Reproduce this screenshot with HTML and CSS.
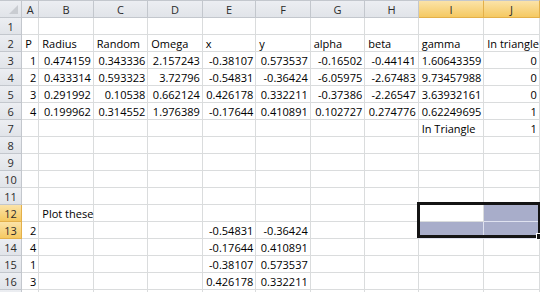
FILE: index.html
```html
<!DOCTYPE html>
<html lang="en">
<head>
    <meta charset="UTF-8">
    <meta name="viewport" content="width=device-width, initial-scale=1.0">
    <title>Sheet1</title>
    <link rel="stylesheet" href="styles.css">
</head>
<body>
    <table class="sheet">
        <colgroup>
            <col class="c-rh"><col class="c-a"><col class="c-w"><col class="c-w"><col class="c-w">
            <col class="c-e"><col class="c-w"><col class="c-w"><col class="c-e"><col class="c-i">
            <col class="c-j"><col class="c-k">
        </colgroup>
        <tr class="head">
            <th class="corner"></th><th>A</th><th>B</th><th>C</th><th>D</th><th>E</th>
            <th>F</th><th>G</th><th>H</th><th class="sel">I</th><th class="sel">J</th><th></th>
        </tr>
        <tr><th>1</th><td></td><td></td><td></td><td></td><td></td><td></td><td></td><td></td><td></td><td></td><td></td></tr>
        <tr><th>2</th><td>P</td><td>Radius</td><td>Random</td><td>Omega</td><td>x</td><td>y</td><td>alpha</td><td>beta</td><td>gamma</td><td>In triangle</td><td></td></tr>
        <tr><th>3</th><td class="n">1</td><td class="n">0.474159</td><td class="n">0.343336</td><td class="n">2.157243</td><td class="n">-0.38107</td><td class="n">0.573537</td><td class="n">-0.16502</td><td class="n">-0.44141</td><td class="n">1.60643359</td><td class="n">0</td><td></td></tr>
        <tr><th>4</th><td class="n">2</td><td class="n">0.433314</td><td class="n">0.593323</td><td class="n">3.72796</td><td class="n">-0.54831</td><td class="n">-0.36424</td><td class="n">-6.05975</td><td class="n">-2.67483</td><td class="n">9.73457988</td><td class="n">0</td><td></td></tr>
        <tr><th>5</th><td class="n">3</td><td class="n">0.291992</td><td class="n">0.10538</td><td class="n">0.662124</td><td class="n">0.426178</td><td class="n">0.332211</td><td class="n">-0.37386</td><td class="n">-2.26547</td><td class="n">3.63932161</td><td class="n">0</td><td></td></tr>
        <tr><th>6</th><td class="n">4</td><td class="n">0.199962</td><td class="n">0.314552</td><td class="n">1.976389</td><td class="n">-0.17644</td><td class="n">0.410891</td><td class="n">0.102727</td><td class="n">0.274776</td><td class="n">0.62249695</td><td class="n">1</td><td></td></tr>
        <tr><th>7</th><td></td><td></td><td></td><td></td><td></td><td></td><td></td><td></td><td>In Triangle</td><td class="n">1</td><td></td></tr>
        <tr><th>8</th><td></td><td></td><td></td><td></td><td></td><td></td><td></td><td></td><td></td><td></td><td></td></tr>
        <tr><th>9</th><td></td><td></td><td></td><td></td><td></td><td></td><td></td><td></td><td></td><td></td><td></td></tr>
        <tr><th>10</th><td></td><td></td><td></td><td></td><td></td><td></td><td></td><td></td><td></td><td></td><td></td></tr>
        <tr><th>11</th><td></td><td></td><td></td><td></td><td></td><td></td><td></td><td></td><td></td><td></td><td></td></tr>
        <tr><th class="sel">12</th><td></td><td>Plot these</td><td></td><td></td><td></td><td></td><td></td><td></td>
            <td class="active">
                <div class="selection"><span class="handle"></span></div>
            </td>
            <td class="hl"></td><td></td></tr>
        <tr><th class="sel">13</th><td class="n">2</td><td></td><td></td><td></td><td class="n">-0.54831</td><td class="n">-0.36424</td><td></td><td></td><td class="hl"></td><td class="hl"></td><td></td></tr>
        <tr><th>14</th><td class="n">4</td><td></td><td></td><td></td><td class="n">-0.17644</td><td class="n">0.410891</td><td></td><td></td><td></td><td></td><td></td></tr>
        <tr><th>15</th><td class="n">1</td><td></td><td></td><td></td><td class="n">-0.38107</td><td class="n">0.573537</td><td></td><td></td><td></td><td></td><td></td></tr>
        <tr><th>16</th><td class="n">3</td><td></td><td></td><td></td><td class="n">0.426178</td><td class="n">0.332211</td><td></td><td></td><td></td><td></td><td></td></tr>
        <tr><th></th><td></td><td></td><td></td><td></td><td></td><td></td><td></td><td></td><td></td><td></td><td></td></tr>
    </table>
</body>
</html>
```

FILE: styles.css
```css
body {
    margin: 0;
    overflow: hidden;
    background-color: #fff;
    font-family: 'Open Sans', 'Liberation Sans', sans-serif;
    font-size: 11px;
    color: #000;
}
.sheet {
    table-layout: fixed;
    width: 560px;
    border-collapse: separate;
    border-spacing: 0;
}
.c-rh { width: 22px; }
.c-a { width: 17px; }
.c-w { width: 54px; }
.c-e { width: 53px; }
.c-i { width: 65px; }
.c-j { width: 55px; }
.c-k { width: 20px; }
.sheet td,
.sheet th {
    box-sizing: border-box;
    height: 17px;
    padding: 1px 2px 0 3px;
    line-height: 15px;
    white-space: nowrap;
    overflow: visible;
    border-right: 1px solid #dadcdd;
    border-bottom: 1px solid #dadcdd;
    text-align: left;
    font-weight: normal;
}
.sheet td.n {
    text-align: right;
    padding-left: 0;
}
.sheet th {
    background: linear-gradient(#eceef2, #e1e4e9);
    border-right-color: #c3c7cd;
    border-bottom-color: #c3c7cd;
    color: #2b2b2b;
    text-align: center;
    padding: 1px 0 0;
}
.head th {
    border-top: 1px solid #c3c7cd;
}
.head th.corner {
    position: relative;
}
.corner::after {
    content: '';
    position: absolute;
    right: 3px;
    bottom: 3px;
    border-left: 9px solid transparent;
    border-bottom: 9px solid #c9ccd1;
}
.sheet th.sel {
    background: linear-gradient(#fbe3a8, #f5c962);
    border-right-color: #e3b04a;
    border-bottom-color: #e3b04a;
}
.sheet td.hl {
    background-color: #a8adca;
    border-right-color: #dfe2f0;
    border-bottom-color: #dfe2f0;
}
.active {
    position: relative;
}
.selection {
    position: absolute;
    left: -2px;
    top: -3px;
    width: 124px;
    height: 36px;
    box-sizing: border-box;
    border: 3px solid #141414;
    z-index: 2;
}
.handle {
    position: absolute;
    right: -5px;
    bottom: -5px;
    width: 5px;
    height: 5px;
    background-color: #141414;
    border: 1px solid #fff;
}
```
